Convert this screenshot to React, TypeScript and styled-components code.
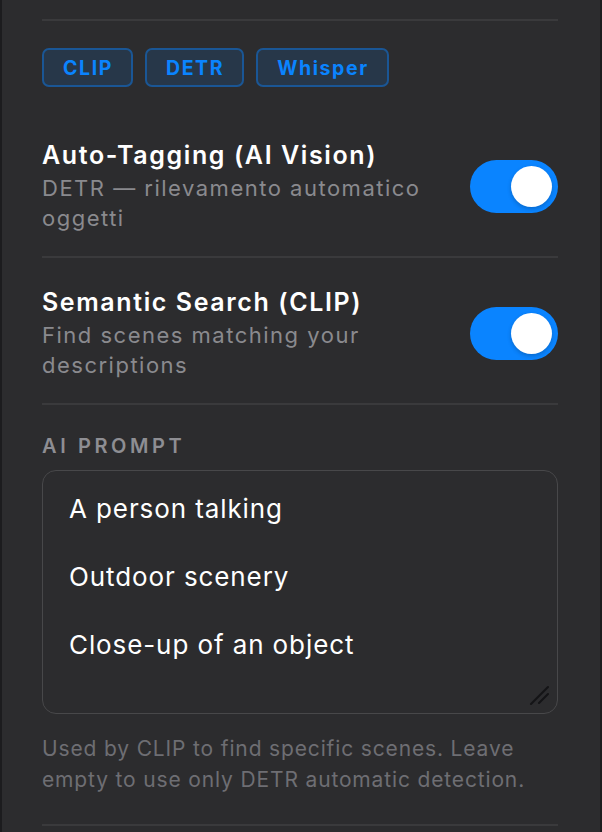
import React from "react";
import styled, { createGlobalStyle } from "styled-components";

const GlobalStyle = createGlobalStyle`
  html, body {
    margin: 0;
    padding: 0;
    background: #1c1c1e;
  }
  body {
    font-family: Inter, "Noto Sans", sans-serif;
    -webkit-font-smoothing: antialiased;
  }
  * { box-sizing: border-box; }
`;

const Panel = styled.div`
  margin: 0 2px;
  min-height: 832px;
  background: #2c2c2e;
  padding: 19px 42px 0 40px;
  display: flex;
  flex-direction: column;
`;

const Divider = styled.div`
  height: 2px;
  background: #3a3a3c;
  flex-shrink: 0;
`;

const BadgeRow = styled.div`
  display: flex;
  gap: 12px;
  margin: 27px 0 26px;
`;

const Badge = styled.span`
  display: inline-flex;
  align-items: center;
  justify-content: center;
  height: 39px;
  padding: 0 18px 0 19px;
  border: 2px solid rgba(10, 132, 255, 0.42);
  background: rgba(10, 132, 255, 0.13);
  border-radius: 7px;
  color: #0a84ff;
  font-size: 19.5px;
  font-weight: 700;
  letter-spacing: 1.6px;
`;

const SettingRow = styled.div<{ $top: number }>`
  display: flex;
  align-items: center;
  gap: 24px;
  padding: ${(p) => p.$top}px 0 23px;
`;

const TextCol = styled.div`
  flex: 1;
  display: flex;
  flex-direction: column;
  gap: 2px;
  min-width: 0;
`;

const Title = styled.div`
  color: #ffffff;
  font-size: 25px;
  font-weight: 600;
  line-height: 32px;
  letter-spacing: 1.6px;
`;

const Desc = styled.div`
  color: #8a8a8e;
  font-size: 22px;
  line-height: 30px;
  letter-spacing: 1.5px;
`;

const Toggle = styled.div<{ $on: boolean }>`
  width: 88px;
  height: 53px;
  border-radius: 27px;
  background: ${(p) => (p.$on ? "#0a84ff" : "#3a3a3c")};
  display: flex;
  align-items: center;
  justify-content: ${(p) => (p.$on ? "flex-end" : "flex-start")};
  padding: 0 6px;
  flex-shrink: 0;
`;

const Knob = styled.div`
  width: 41px;
  height: 41px;
  border-radius: 50%;
  background: #ffffff;
  box-shadow: 0 2px 4px rgba(0, 0, 0, 0.2);
`;

const PromptSection = styled.div`
  display: flex;
  flex-direction: column;
  padding: 29px 0 29px;
`;

const Label = styled.div`
  color: #8e8e93;
  font-size: 20px;
  font-weight: 600;
  line-height: 24px;
  letter-spacing: 3.6px;
  margin-bottom: 12px;
`;

const AreaWrap = styled.div`
  position: relative;
`;

const PromptArea = styled.textarea`
  display: block;
  width: 100%;
  height: 244px;
  resize: none;
  background: #2c2c2e;
  border: 1.5px solid #48484a;
  border-radius: 14px;
  color: #ffffff;
  font-family: Inter, "Noto Sans", sans-serif;
  font-size: 26px;
  line-height: 34px;
  letter-spacing: 0.9px;
  padding: 21px 26px;
  outline: none;
  overflow: hidden;
`;

const Grip = styled.svg`
  position: absolute;
  right: 9px;
  bottom: 9px;
  width: 20px;
  height: 20px;
`;

const Helper = styled.div`
  color: #6e6e73;
  font-size: 21px;
  line-height: 31px;
  margin-top: 19px;
  letter-spacing: 0.85px;
`;

const promptText = "A person talking\n\nOutdoor scenery\n\nClose-up of an object";

export default function App() {
  return (
    <>
      <GlobalStyle />
      <Panel>
        <Divider />
        <BadgeRow>
          <Badge>CLIP</Badge>
          <Badge>DETR</Badge>
          <Badge>Whisper</Badge>
        </BadgeRow>
        <SettingRow $top={26}>
          <TextCol>
            <Title>Auto-Tagging (AI Vision)</Title>
            <Desc>DETR — rilevamento automatico oggetti</Desc>
          </TextCol>
          <Toggle $on>
            <Knob />
          </Toggle>
        </SettingRow>
        <Divider />
        <SettingRow $top={28}>
          <TextCol>
            <Title>Semantic Search (CLIP)</Title>
            <Desc>Find scenes matching your descriptions</Desc>
          </TextCol>
          <Toggle $on>
            <Knob />
          </Toggle>
        </SettingRow>
        <Divider />
        <PromptSection>
          <Label>AI PROMPT</Label>
          <AreaWrap>
            <PromptArea defaultValue={promptText} spellCheck={false} />
            <Grip viewBox="0 0 20 20">
              <path d="M2 19 L19 2" stroke="#141416" strokeWidth="2" strokeLinecap="round" />
              <path d="M10 18 L19 9" stroke="#141416" strokeWidth="2" strokeLinecap="round" />
            </Grip>
          </AreaWrap>
          <Helper>
            Used by CLIP to find specific scenes. Leave empty to use only DETR automatic detection.
          </Helper>
        </PromptSection>
        <Divider />
      </Panel>
    </>
  );
}
